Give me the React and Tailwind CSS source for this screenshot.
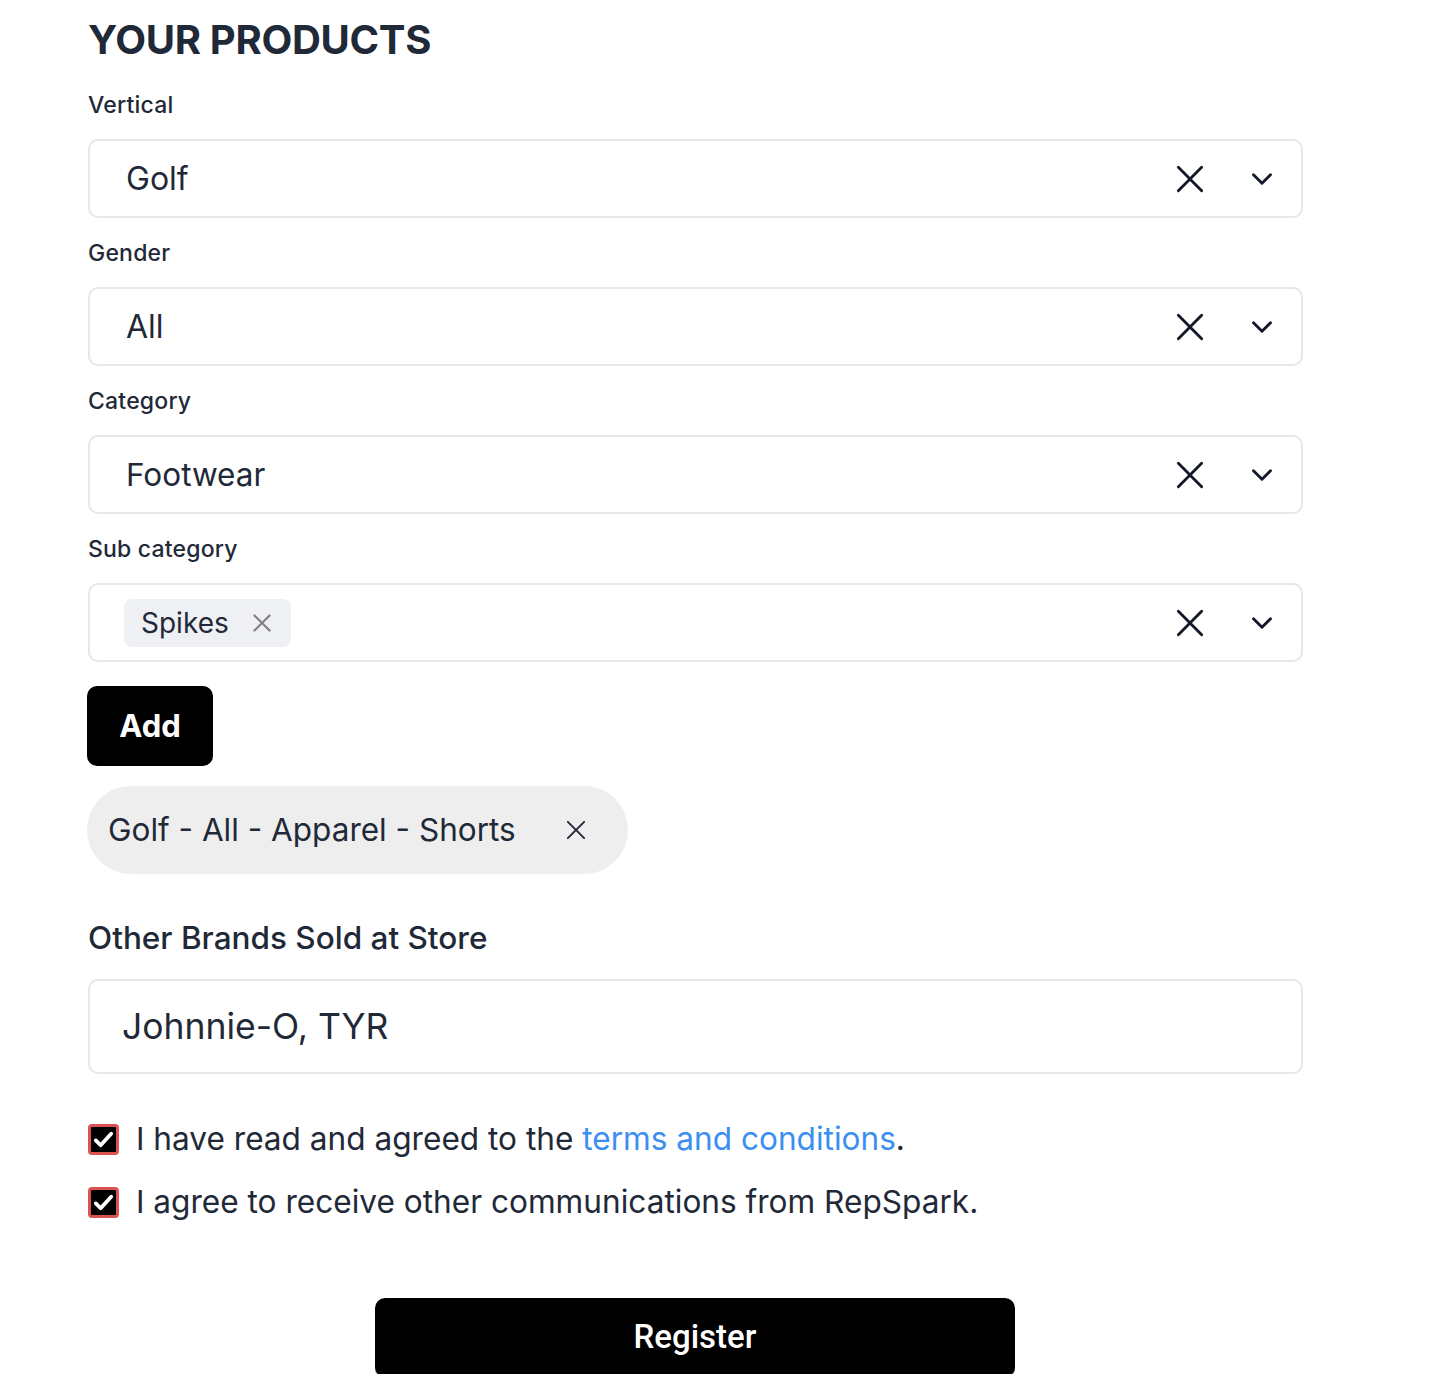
import React from 'react';

const font = { fontFamily: 'Inter, "Noto Sans", sans-serif' };

function XIcon({ className = '', strokeWidth = 2 }) {
  return (
    <svg viewBox="0 0 24 24" className={className} fill="none" stroke="currentColor" strokeWidth={strokeWidth} strokeLinecap="round">
      <path d="M5 5l14 14M19 5L5 19" />
    </svg>
  );
}

function Chevron() {
  return (
    <svg viewBox="0 0 24 24" className="w-[34px] h-[34px] text-[#111827]" fill="none" stroke="currentColor" strokeWidth="2" strokeLinecap="round" strokeLinejoin="round">
      <path d="M6 9l6 6 6-6" />
    </svg>
  );
}

function SelectField({ label, children }) {
  return (
    <div className="flex flex-col">
      <label className="text-[23px] font-medium text-[#1f2937] leading-[30px] pt-[1px] tracking-[0.2px]">{label}</label>
      <div className="mt-[19px] h-[79px] w-[1215px] border-2 border-[#e5e7eb] rounded-[10px] flex items-center pl-[36px] pr-[22px]">
        <div className="flex-1 flex items-center">{children}</div>
        <XIcon className="w-[40px] h-[40px] text-[#111827] mr-[35px]" strokeWidth={1.7} />
        <Chevron />
      </div>
    </div>
  );
}

function CheckBox() {
  return (
    <span className="w-[31px] h-[31px] rounded-[4px] border-[3px] border-[#d9534f] bg-black flex items-center justify-center shrink-0">
      <svg viewBox="0 0 24 24" className="w-[23px] h-[23px]" fill="none" stroke="white" strokeWidth="4" strokeLinecap="round" strokeLinejoin="round">
        <path d="M4 13l5 5L20 6" />
      </svg>
    </span>
  );
}

export default function App() {
  return (
    <div className="min-h-[1374px] bg-white pl-[88px] overflow-hidden" style={font}>
      <h1 className="text-[40px] font-bold text-[#1f2937] leading-[48px] pt-[16px] tracking-[-0.3px]">YOUR PRODUCTS</h1>
      <div className="mt-[25px] flex flex-col gap-[19px]">
        <SelectField label="Vertical">
          <span className="text-[32px] text-[#1f2937]">Golf</span>
        </SelectField>
        <SelectField label="Gender">
          <span className="text-[32px] text-[#1f2937]">All</span>
        </SelectField>
        <SelectField label="Category">
          <span className="text-[31.5px] text-[#1f2937]">Footwear</span>
        </SelectField>
        <SelectField label="Sub category">
          <span className="-ml-[2px] h-[48px] rounded-[8px] bg-[#eef0f4] flex items-center pl-[17px] pr-[16px] gap-[20px]">
            <span className="text-[28px] text-[#1f2937]">Spikes</span>
            <XIcon className="w-[26px] h-[26px] text-[#808080]" />
          </span>
        </SelectField>
      </div>
      <div className="mt-[24px]">
        <button className="block -ml-[1px] w-[126px] h-[80px] bg-black rounded-[10px] text-white text-[31px] font-bold">Add</button>
      </div>
      <div className="mt-[20px] -ml-[1px] w-[541px] h-[88px] rounded-full bg-[#eeeeee] flex items-center pl-[21px] pr-[38px]">
        <span className="flex-1 text-[31.5px] text-[#1f2937]">Golf - All - Apparel - Shorts</span>
        <XIcon className="w-[28px] h-[28px] text-[#1f2937]" strokeWidth={1.6} />
      </div>
      <div className="mt-[44px] text-[31.5px] font-medium text-[#1f2937] leading-[40px]">Other Brands Sold at Store</div>
      <div className="mt-[21px] w-[1215px] h-[95px] border-2 border-[#e5e7eb] rounded-[10px] flex items-center pl-[32px]">
        <span className="text-[35.5px] text-[#1f2937]">Johnnie-O, TYR</span>
      </div>
      <div className="mt-[46px] flex flex-col gap-[25px]">
        <div className="flex items-center gap-[17px]">
          <CheckBox />
          <span className="text-[31.6px] text-[#1f2937] leading-[38px]">
            I have read and agreed to the <span className="text-[#3b8ff0]">terms and conditions</span>.
          </span>
        </div>
        <div className="flex items-center gap-[17px]">
          <CheckBox />
          <span className="text-[31.6px] text-[#1f2937] leading-[38px]">I agree to receive other communications from RepSpark.</span>
        </div>
      </div>
      <div className="mt-[77px] pl-[287px]">
        <button className="w-[640px] h-[80px] bg-black rounded-[10px] text-white text-[33px] font-medium border-b-2 border-[#444]" style={{ fontFamily: 'Roboto, sans-serif' }}>
          Register
        </button>
      </div>
    </div>
  );
}
